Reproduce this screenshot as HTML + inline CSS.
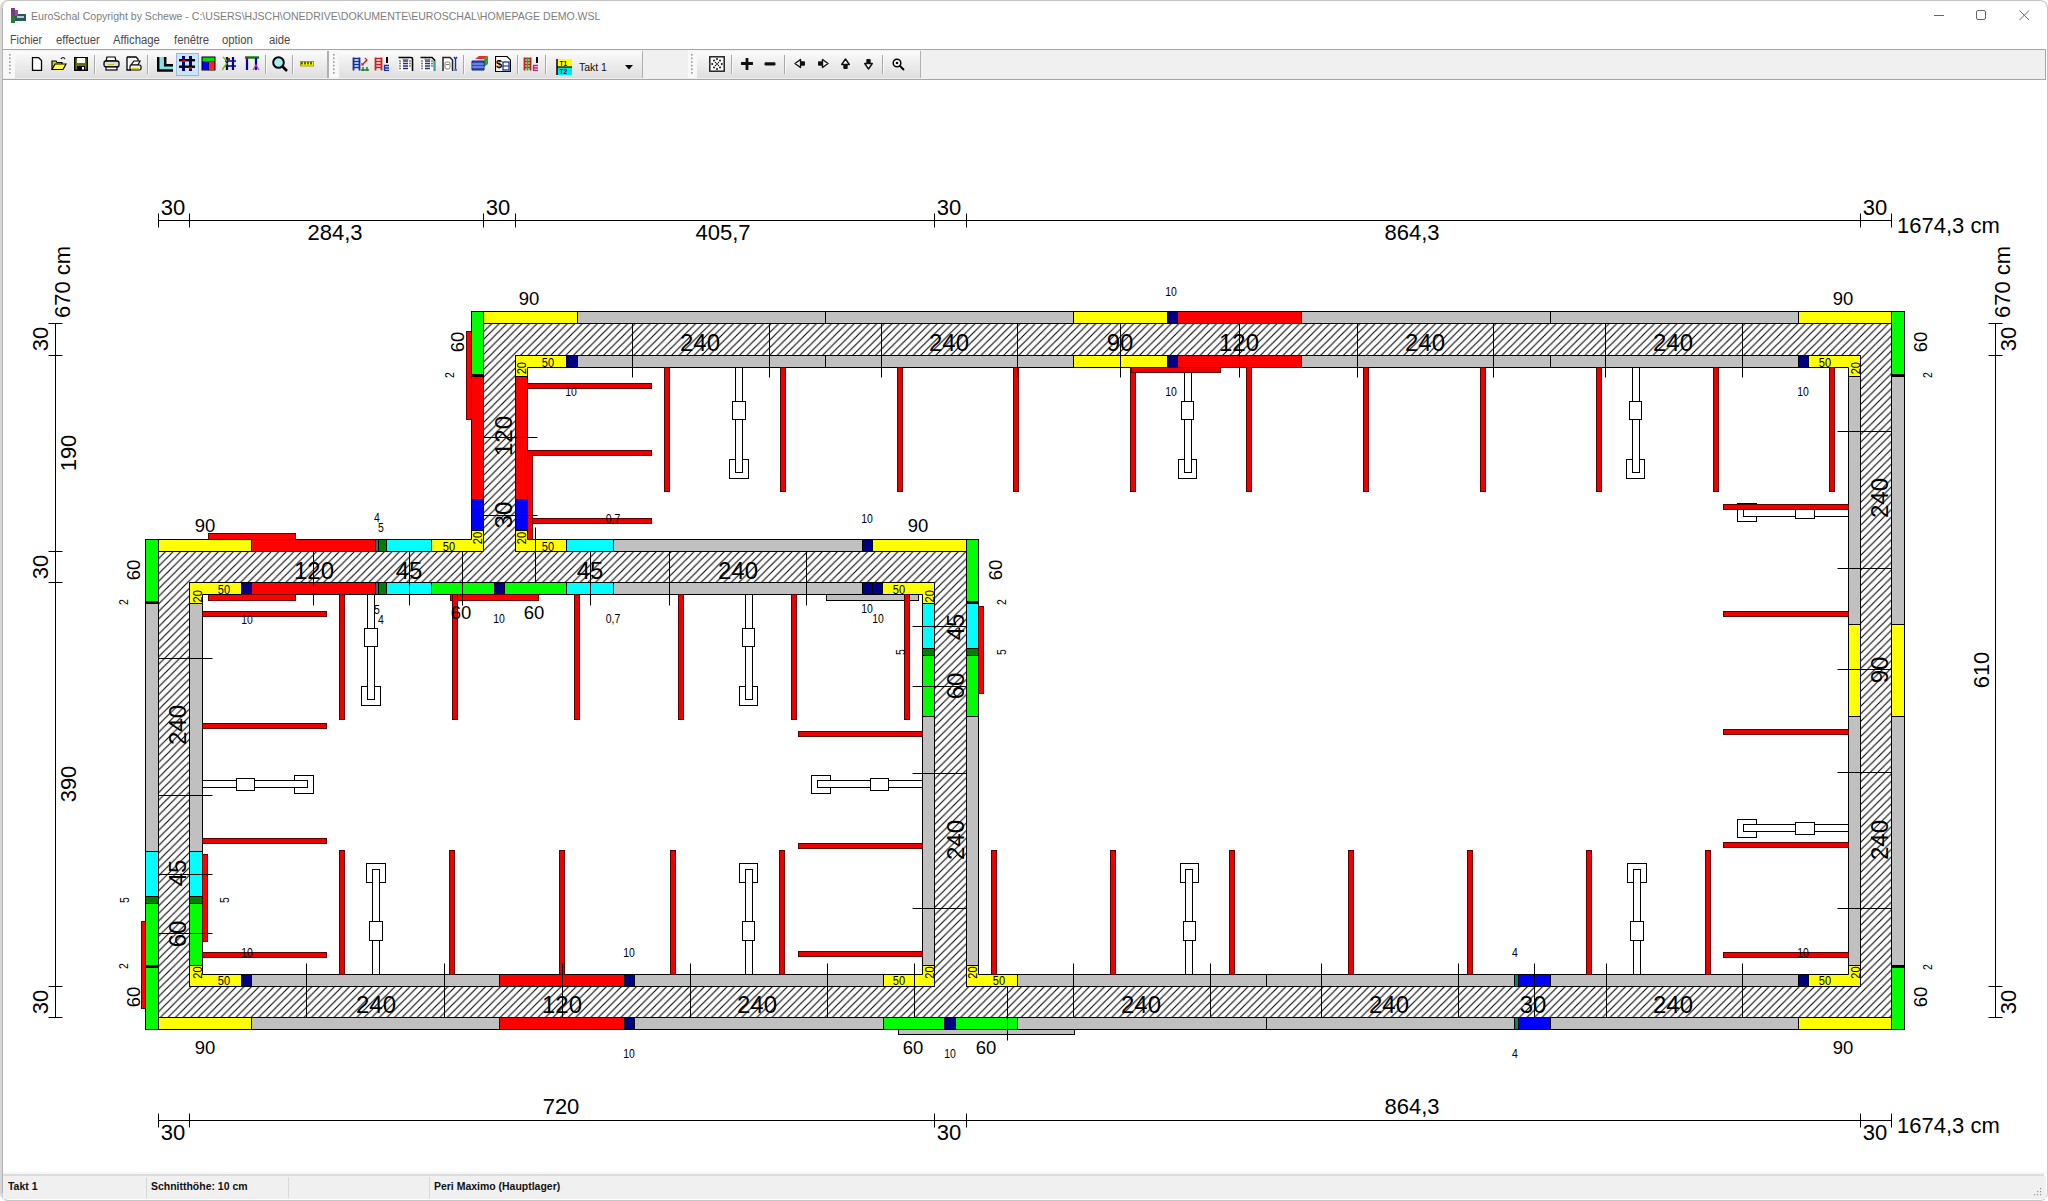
<!DOCTYPE html>
<html><head><meta charset="utf-8"><title>EuroSchal</title>
<style>
html,body{margin:0;padding:0;}
body{width:2048px;height:1201px;position:relative;overflow:hidden;background:#fff;font-family:"Liberation Sans",sans-serif;}
.abs{position:absolute;}
svg text{font-family:"Liberation Sans",sans-serif;}
</style></head><body>
<div class="abs" style="left:0;top:0;width:2048px;height:1201px;background:#fff;"></div>
<!-- window frame -->
<div class="abs" style="left:0;top:0;border:1px solid #c4c4c4;border-left:3px solid #d6d6d6;border-radius:8px 8px 8px 8px;box-sizing:border-box;width:2048px;height:1201px;"></div><div class="abs" style="left:2px;top:8px;width:1px;height:1185px;background:#b4b4b4"></div>
<svg style="position:absolute;left:11px;top:8px" width="15" height="15" viewBox="0 0 15 15"><rect x="0" y="0" width="4" height="15" fill="#7a3a8a"/><rect x="0" y="8" width="4" height="7" fill="#2a7a3a"/><rect x="4" y="6" width="11" height="7" fill="#2a5a5a"/><rect x="6" y="8" width="7" height="2" fill="#c0c0e0"/><rect x="4" y="2" width="3" height="6" fill="#9050a0"/></svg>
<div class="abs" style="left:31px;top:9px;font-size:11.8px;color:#7d7d7d;white-space:nowrap;transform-origin:0 0;transform:scaleX(0.895)">EuroSchal Copyright by Schewe - C:\USERS\HJSCH\ONEDRIVE\DOKUMENTE\EUROSCHAL\HOMEPAGE DEMO.WSL</div>
<svg class="abs" style="left:1930px;top:8px" width="110" height="16" viewBox="0 0 110 16">
<path d="M4,7.5 H14" stroke="#666" stroke-width="1"/>
<rect x="46.5" y="2.5" width="9" height="9" rx="1.5" fill="none" stroke="#666" stroke-width="1"/>
<path d="M89.5,2.5 L99,12 M99,2.5 L89.5,12" stroke="#666" stroke-width="1"/>
</svg>
<div class="abs" style="left:10px;top:33px;font-size:12px;color:#4a4a4a;white-space:nowrap;word-spacing:0">
<style>.mi{position:absolute;transform-origin:0 0;transform:scaleX(0.94)}</style>
<span class="mi" style="left:0;transform:scaleX(0.89)">Fichier</span><span class="mi" style="left:46px">effectuer</span><span class="mi" style="left:103px">Affichage</span><span class="mi" style="left:164px">fenêtre</span><span class="mi" style="left:212px">option</span><span class="mi" style="left:259px">aide</span></div>
<!-- toolbar band -->
<div class="abs" style="left:3px;top:49px;width:2043px;height:31px;background:#f0f0f0;border-top:1px solid #a6a6a6;border-bottom:1px solid #a6a6a6;border-right:1px solid #a6a6a6;box-sizing:border-box;"></div>
<div class="abs" style="left:3px;top:50px;width:12px;height:28px;background:#f8f8f8;"></div>
<div class="abs" style="left:15px;top:51px;width:312px;height:27px;background:linear-gradient(#fbfbfb,#dedede);border-right:2px solid #b0b0b0;"></div>
<div class="abs" style="left:329px;top:50px;width:10px;height:28px;background:#f8f8f8;"></div>
<div class="abs" style="left:339px;top:51px;width:303px;height:27px;background:linear-gradient(#fbfbfb,#dedede);border-right:1px solid #b0b0b0;"></div>
<div class="abs" style="left:688px;top:50px;width:9px;height:28px;background:#f8f8f8;"></div>
<div class="abs" style="left:697px;top:51px;width:223px;height:27px;background:linear-gradient(#fbfbfb,#dedede);border-right:1px solid #b0b0b0;"></div>
<svg style="position:absolute;left:9px;top:54px" width="2" height="22" viewBox="0 0 2 22"><rect x="0" y="0.0" width="1.6" height="1.6" fill="#9a9a9a"/><rect x="0" y="3.6" width="1.6" height="1.6" fill="#9a9a9a"/><rect x="0" y="7.2" width="1.6" height="1.6" fill="#9a9a9a"/><rect x="0" y="10.8" width="1.6" height="1.6" fill="#9a9a9a"/><rect x="0" y="14.4" width="1.6" height="1.6" fill="#9a9a9a"/><rect x="0" y="18.0" width="1.6" height="1.6" fill="#9a9a9a"/></svg>
<svg style="position:absolute;left:31px;top:57px" width="12" height="14" viewBox="0 0 12 14"><path d="M1.5,0.5 H7.5 L10.5,3.5 V13.5 H1.5 Z" fill="#fff" stroke="#000" stroke-width="1.3"/></svg>
<svg style="position:absolute;left:51px;top:56px" width="16" height="15" viewBox="0 0 16 15"><path d="M1,5 H5 L6,6.5 H11 V13.5 H1 Z" fill="#d8d800" stroke="#000" stroke-width="1.2"/><path d="M1,13.5 L4,8 H15 L12,13.5 Z" fill="#ffff40" stroke="#000" stroke-width="1.2"/><path d="M10,3 Q12,0 14,3" fill="none" stroke="#000" stroke-width="1.2"/></svg>
<svg style="position:absolute;left:74px;top:57px" width="14" height="14" viewBox="0 0 14 14"><rect x="0.7" y="0.7" width="12.6" height="12.6" fill="#707000" stroke="#000" stroke-width="1.4"/><rect x="3" y="1" width="8" height="5" fill="#fff"/><rect x="3" y="9" width="8" height="4.3" fill="#000"/><rect x="8" y="10" width="2" height="2.5" fill="#fff"/></svg>
<div style="position:absolute;left:94px;top:55px;width:1px;height:19px;background:#a8a8a8;border-right:1px solid #fafafa"></div>
<svg style="position:absolute;left:103px;top:56px" width="17" height="15" viewBox="0 0 17 15"><path d="M4,1 H12 L13,5 H3 Z" fill="#fff" stroke="#000" stroke-width="1.2"/><rect x="1" y="5" width="15" height="6" rx="2" fill="#ddd" stroke="#000" stroke-width="1.3"/><rect x="3" y="11" width="11" height="3" fill="#fff" stroke="#000" stroke-width="1.2"/><rect x="5" y="8" width="6" height="1.2" fill="#cc0"/></svg>
<svg style="position:absolute;left:126px;top:56px" width="16" height="16" viewBox="0 0 16 16"><path d="M1,1 H10 L12,3 V6 M1,1 V14 H5" fill="#fff" stroke="#000" stroke-width="1.3"/><path d="M5,9 L8,5 H14 L12,9 Z" fill="#fff" stroke="#000" stroke-width="1.2"/><rect x="4" y="9" width="11" height="5" rx="1.5" fill="#eee" stroke="#000" stroke-width="1.2"/><rect x="6" y="12" width="7" height="1.2" fill="#cc0"/></svg>
<div style="position:absolute;left:147px;top:55px;width:1px;height:19px;background:#a8a8a8;border-right:1px solid #fafafa"></div>
<svg style="position:absolute;left:157px;top:57px" width="16" height="15" viewBox="0 0 16 15"><path d="M2.5,0 V12 H16 V7.5 H9 V0 Z" fill="#80e0e8"/><path d="M1.2,0 V13.5 H16" fill="none" stroke="#000" stroke-width="2.5"/><path d="M8.2,0 V8.3 H16" fill="none" stroke="#000" stroke-width="2.5"/></svg>
<div style="position:absolute;left:176px;top:53px;width:21px;height:21px;background:#cce4f7;border:1px solid #99b8d8"></div>
<svg style="position:absolute;left:179px;top:56px" width="16" height="15" viewBox="0 0 16 15"><rect x="3" y="0" width="3" height="15" fill="#000080"/><rect x="10" y="0" width="3" height="15" fill="#000080"/><rect x="0" y="3" width="16" height="2.4" fill="#000"/><rect x="0" y="9.5" width="16" height="2.4" fill="#000"/><rect x="3" y="4" width="3" height="2" fill="#d00"/><rect x="10" y="11" width="3" height="2" fill="#d00"/></svg>
<svg style="position:absolute;left:201px;top:56px" width="15" height="15" viewBox="0 0 15 15"><rect x="0.5" y="0.5" width="14" height="14" fill="#000" /><rect x="1.5" y="1.5" width="12" height="4" fill="#00e000"/><rect x="1.5" y="6" width="6" height="8" fill="#0000ff"/><rect x="8" y="6" width="5.5" height="8" fill="#ff2020"/></svg>
<svg style="position:absolute;left:222px;top:56px" width="16" height="15" viewBox="0 0 16 15"><path d="M5,1 V14 M11,1 V14" stroke="#00008b" stroke-width="2.2"/><path d="M3,5 H14 M3,10 H14" stroke="#00008b" stroke-width="1.5"/><path d="M0,14 L5,7 M1,1 L5,5" stroke="#70c000" stroke-width="1.5"/><rect x="6" y="2" width="2" height="2" fill="#d00"/></svg>
<svg style="position:absolute;left:244px;top:56px" width="16" height="15" viewBox="0 0 16 15"><path d="M1,1.5 H15" stroke="#008000" stroke-width="2.4"/><path d="M3,2 V14 M12,2 V14" stroke="#0000c0" stroke-width="2.2"/><path d="M9,14 L12,9 L15,14" fill="none" stroke="#c040c0" stroke-width="1.2"/><rect x="2" y="1" width="2" height="2" fill="#d00"/></svg>
<div style="position:absolute;left:265px;top:55px;width:1px;height:19px;background:#a8a8a8;border-right:1px solid #fafafa"></div>
<svg style="position:absolute;left:272px;top:56px" width="16" height="16" viewBox="0 0 16 16"><circle cx="6.5" cy="6.5" r="5.3" fill="#a0f0f0" stroke="#000" stroke-width="2"/><path d="M10.5,10.5 L15,15" stroke="#000" stroke-width="2.6"/></svg>
<div style="position:absolute;left:292px;top:55px;width:1px;height:19px;background:#a8a8a8;border-right:1px solid #fafafa"></div>
<svg style="position:absolute;left:300px;top:61px" width="15" height="6" viewBox="0 0 15 6"><rect x="0.5" y="0.5" width="13" height="4.5" fill="#ffff00" stroke="#a0a000" stroke-width="1"/><path d="M2,1 V3.5 M5,1 V3.5 M8,1 V3.5 M11,1 V3.5" stroke="#000" stroke-width="1.2"/></svg>
<svg style="position:absolute;left:333px;top:54px" width="2" height="22" viewBox="0 0 2 22"><rect x="0" y="0.0" width="1.6" height="1.6" fill="#9a9a9a"/><rect x="0" y="3.6" width="1.6" height="1.6" fill="#9a9a9a"/><rect x="0" y="7.2" width="1.6" height="1.6" fill="#9a9a9a"/><rect x="0" y="10.8" width="1.6" height="1.6" fill="#9a9a9a"/><rect x="0" y="14.4" width="1.6" height="1.6" fill="#9a9a9a"/><rect x="0" y="18.0" width="1.6" height="1.6" fill="#9a9a9a"/></svg>
<svg style="position:absolute;left:352px;top:57px" width="17" height="14" viewBox="0 0 17 14"><path d="M1.5,0.5 V13.5 M7.5,0.5 V13.5" stroke="#1030a0" stroke-width="1.8"/><path d="M1.5,1.5 H7.5 M1.5,4.5 H7.5 M1.5,7.5 H7.5 M1.5,10.5 H7.5" stroke="#1030a0" stroke-width="1.3"/><path d="M9,13 H17 M11,10 V14 M15,10 V14" stroke="#208020" stroke-width="1.5"/><path d="M10,8 L15,3" stroke="#e02020" stroke-width="1.5"/><path d="M13,1 L15,3 L13,5 M10,6 V8 H12" fill="none" stroke="#e02020" stroke-width="1.2"/></svg>
<svg style="position:absolute;left:374px;top:57px" width="17" height="14" viewBox="0 0 17 14"><path d="M1.5,0.5 V13.5 M7.5,0.5 V13.5" stroke="#d02020" stroke-width="1.8"/><path d="M1.5,1.5 H7.5 M1.5,4.5 H7.5 M1.5,7.5 H7.5 M1.5,10.5 H7.5" stroke="#d02020" stroke-width="1.3"/><path d="M10,8.5 H15 M10,11 H15 M10,13.5 H15 M10.5,8.5 V13.5" stroke="#1030c0" stroke-width="1.4"/><rect x="12" y="0" width="2" height="6" fill="#000"/></svg>
<svg style="position:absolute;left:398px;top:56px" width="16" height="16" viewBox="0 0 16 16"><rect x="0.5" y="1" width="14" height="14" fill="#fff"/><path d="M0.5,1.5 H13 Q14.5,1.5 14.5,3 V15" fill="none" stroke="#000" stroke-width="1.6"/><path d="M1.5,5 H2.5 M1.5,7.5 H2.5 M1.5,10 H2.5 M1.5,12.5 H2.5" stroke="#000" stroke-width="1.3"/><path d="M5,5 H10 M5,7.5 H10 M5,10 H10 M5,12.5 H10" stroke="#203080" stroke-width="1.3"/><path d="M11.5,5 H12.5 M11.5,7.5 H12.5 M11.5,10 H12.5" stroke="#000" stroke-width="1.3"/><rect x="4.5" y="2.5" width="6" height="1.5" fill="#a08080"/></svg>
<svg style="position:absolute;left:420px;top:56px" width="16" height="16" viewBox="0 0 16 16"><rect x="0.5" y="1" width="14" height="14" fill="#fff"/><path d="M0.5,1.5 H12 L14.5,4 V15" fill="none" stroke="#000" stroke-width="1.6"/><path d="M14.5,5 V15" stroke="#40a0a0" stroke-width="1.2"/><path d="M1.5,5 H2.5 M1.5,7.5 H2.5 M1.5,10 H2.5 M1.5,12.5 H2.5" stroke="#000" stroke-width="1.3"/><path d="M5,5 H10 M5,7.5 H10 M5,10 H10 M5,12.5 H10" stroke="#203080" stroke-width="1.3"/><path d="M11.5,5 H12.5 M11.5,7.5 H12.5 M11.5,10 H12.5" stroke="#000" stroke-width="1.3"/><rect x="4.5" y="2.5" width="6" height="1.5" fill="#a08080"/></svg>
<svg style="position:absolute;left:442px;top:56px" width="17" height="16" viewBox="0 0 17 16"><path d="M1,15 V1.5 H8 L10.5,4 V15" fill="#fff" stroke="#222" stroke-width="1.5"/><rect x="3" y="6" width="5" height="7" rx="1.5" fill="none" stroke="#777" stroke-width="1"/><path d="M4,8.5 H7" stroke="#777"/><path d="M13.5,3 V13 M12,1 L13.5,3 L15,1" fill="none" stroke="#2030a0" stroke-width="1.4"/><path d="M12,14 H15" stroke="#2030a0" stroke-width="1.2"/></svg>
<div style="position:absolute;left:463px;top:55px;width:1px;height:19px;background:#a8a8a8;border-right:1px solid #fafafa"></div>
<svg style="position:absolute;left:471px;top:56px" width="17" height="15" viewBox="0 0 17 15"><path d="M4,3 L8,0 H17 L13,3 Z" fill="#e03030"/><path d="M13,3 L17,0 V8 L13,11 Z" fill="#30a030"/><path d="M1,5 H13 V14 H1 Z" fill="#3050c0" stroke="#102080" stroke-width="1"/><path d="M1,8 H13 M1,11 H13" stroke="#a0b0ff" stroke-width="1"/></svg>
<svg style="position:absolute;left:495px;top:56px" width="16" height="16" viewBox="0 0 16 16"><path d="M0.5,0.5 H12 L15.5,4 V15.5 H0.5 Z" fill="#fff" stroke="#000" stroke-width="1.2"/><text x="1" y="12" font-size="11" font-family="Liberation Sans" font-weight="bold" fill="#000">$</text><rect x="8" y="6" width="6" height="8" fill="none" stroke="#2040a0" stroke-width="1.4"/><path d="M8,10 H14" stroke="#2040a0" stroke-width="1.2"/></svg>
<div style="position:absolute;left:517px;top:55px;width:1px;height:19px;background:#a8a8a8;border-right:1px solid #fafafa"></div>
<svg style="position:absolute;left:523px;top:57px" width="17" height="14" viewBox="0 0 17 14"><path d="M1.5,0.5 V13.5 M7.5,0.5 V13.5" stroke="#c02020" stroke-width="1.8"/><path d="M1.5,1.5 H7.5 M1.5,4.5 H7.5 M1.5,7.5 H7.5 M1.5,10.5 H7.5" stroke="#c02020" stroke-width="1.3"/><path d="M4.5,0.5 V13.5" stroke="#20b020" stroke-width="1.8"/><path d="M10,8.5 H15 M10,11 H15 M10,13.5 H15 M10.5,8.5 V13.5" stroke="#c02080" stroke-width="1.4"/><rect x="13" y="0" width="2" height="6" fill="#000"/></svg>
<div style="position:absolute;left:545px;top:55px;width:1px;height:19px;background:#a8a8a8;border-right:1px solid #fafafa"></div>
<svg style="position:absolute;left:556px;top:59px" width="16" height="16" viewBox="0 0 16 16"><rect x="1" y="0" width="15" height="8" fill="#ffff00"/><rect x="1" y="8" width="15" height="8" fill="#00e8f0"/><path d="M1,0 V16" stroke="#000" stroke-width="1.5"/><path d="M1,8 H16" stroke="#000" stroke-width="1.2"/><text x="3.5" y="6.6" font-size="6.5" font-weight="bold" font-family="Liberation Sans" fill="#000">T1</text><text x="3.5" y="14.8" font-size="6.5" font-weight="bold" font-family="Liberation Sans" fill="#000">T2</text></svg>
<div style="position:absolute;left:579px;top:61px;font-size:11.5px;color:#111;transform-origin:0 0;transform:scaleX(0.91)">Takt 1</div>
<svg style="position:absolute;left:625px;top:65px" width="8" height="5" viewBox="0 0 8 5"><path d="M0,0 H8 L4,4.5 Z" fill="#000"/></svg>
<svg style="position:absolute;left:691px;top:54px" width="2" height="22" viewBox="0 0 2 22"><rect x="0" y="0.0" width="1.6" height="1.6" fill="#9a9a9a"/><rect x="0" y="3.6" width="1.6" height="1.6" fill="#9a9a9a"/><rect x="0" y="7.2" width="1.6" height="1.6" fill="#9a9a9a"/><rect x="0" y="10.8" width="1.6" height="1.6" fill="#9a9a9a"/><rect x="0" y="14.4" width="1.6" height="1.6" fill="#9a9a9a"/><rect x="0" y="18.0" width="1.6" height="1.6" fill="#9a9a9a"/></svg>
<svg style="position:absolute;left:709px;top:56px" width="16" height="16" viewBox="0 0 16 16"><rect x="0.8" y="0.8" width="14.4" height="14.4" fill="#fff" stroke="#222" stroke-width="1.5"/><g fill="#111"><circle cx="8" cy="3" r="1"/><circle cx="5" cy="4.5" r="1"/><circle cx="11" cy="4.5" r="1"/><circle cx="3.2" cy="8" r="1"/><circle cx="12.8" cy="8" r="1"/><circle cx="5" cy="11.5" r="1"/><circle cx="11" cy="11.5" r="1"/><circle cx="8" cy="13" r="1"/><circle cx="8" cy="8" r="1"/><circle cx="6.5" cy="6.5" r="0.7"/><circle cx="9.5" cy="9.5" r="0.7"/><circle cx="9.5" cy="6.5" r="0.7"/><circle cx="6.5" cy="9.5" r="0.7"/></g></svg>
<div style="position:absolute;left:731px;top:55px;width:1px;height:19px;background:#a8a8a8;border-right:1px solid #fafafa"></div>
<svg style="position:absolute;left:741px;top:58px" width="12" height="12" viewBox="0 0 12 12"><path d="M6,0.5 V11.5 M0.5,5.5 H11.5" stroke="#111" stroke-width="2.8" stroke-linecap="round"/></svg>
<svg style="position:absolute;left:764px;top:61px" width="12" height="6" viewBox="0 0 12 6"><rect x="0.5" y="1.2" width="11" height="3.2" rx="1.2" fill="#111"/></svg>
<div style="position:absolute;left:784px;top:55px;width:1px;height:19px;background:#a8a8a8;border-right:1px solid #fafafa"></div>
<svg style="position:absolute;left:794px;top:58px" width="12" height="11" viewBox="0 0 12 11"><path d="M1,5.5 L6.5,1.5 V9.5 Z" fill="#fff" stroke="#111" stroke-width="1.4" stroke-linejoin="round"/><rect x="6" y="3.3" width="5" height="4.4" rx="1" fill="#111"/></svg>
<svg style="position:absolute;left:817px;top:58px" width="12" height="11" viewBox="0 0 12 11"><path d="M11,5.5 L5.5,1.5 V9.5 Z" fill="#fff" stroke="#111" stroke-width="1.4" stroke-linejoin="round"/><rect x="1" y="3.3" width="5" height="4.4" rx="1" fill="#111"/></svg>
<svg style="position:absolute;left:841px;top:58px" width="9" height="12" viewBox="0 0 9 12"><path d="M4.5,1 L8.3,6.5 H0.7 Z" fill="#fff" stroke="#111" stroke-width="1.4" stroke-linejoin="round"/><rect x="2.3" y="6" width="4.4" height="5" rx="1" fill="#111"/></svg>
<svg style="position:absolute;left:864px;top:58px" width="9" height="12" viewBox="0 0 9 12"><path d="M4.5,11 L8.3,5.5 H0.7 Z" fill="#fff" stroke="#111" stroke-width="1.4" stroke-linejoin="round"/><rect x="2.3" y="1" width="4.4" height="5" rx="1" fill="#111"/></svg>
<div style="position:absolute;left:882px;top:55px;width:1px;height:19px;background:#a8a8a8;border-right:1px solid #fafafa"></div>
<svg style="position:absolute;left:892px;top:58px" width="13" height="13" viewBox="0 0 13 13"><circle cx="5" cy="5" r="3.8" fill="#fff" stroke="#000" stroke-width="1.5"/><circle cx="5" cy="5" r="1.3" fill="#000"/><path d="M7.5,7.5 L12,12" stroke="#000" stroke-width="2"/></svg>
<!-- drawing -->
<svg class="abs" style="left:0;top:0" width="2048" height="1201" viewBox="0 0 2048 1201">
<defs>
<pattern id="hatch" patternUnits="userSpaceOnUse" width="7.55" height="7.55" patternTransform="translate(0,0)">
<rect width="7.55" height="7.55" fill="#fff"/>
<path d="M-1,1 L1,-1 M0,7.55 L7.55,0 M6.55,8.55 L8.55,6.55" stroke="#000" stroke-width="1.1"/>
</pattern>
</defs>
<path d="M483.5,323.5 L1891.5,323.5 L1891.5,1017.5 L158.5,1017.5 L158.5,551.5 L483.5,551.5 Z M515.5,355.5 L1860.5,355.5 L1860.5,986.5 L966.5,986.5 L966.5,551.5 L515.5,551.5 Z M189.5,582.5 L934.5,582.5 L934.5,986.5 L189.5,986.5 Z" fill="url(#hatch)" fill-rule="evenodd" stroke="#000" stroke-width="1"/>
<rect x="483.5" y="311.5" width="94.0" height="12.0" fill="#ffff00" stroke="#000" stroke-width="1"/>
<rect x="577.5" y="311.5" width="248.0" height="12.0" fill="#c0c0c0" stroke="#000" stroke-width="1"/>
<rect x="825.5" y="311.5" width="248.0" height="12.0" fill="#c0c0c0" stroke="#000" stroke-width="1"/>
<rect x="1073.5" y="311.5" width="94.0" height="12.0" fill="#ffff00" stroke="#000" stroke-width="1"/>
<rect x="1167.5" y="311.5" width="10.0" height="12.0" fill="#000080" stroke="#000" stroke-width="1"/>
<rect x="1177.5" y="311.5" width="124.0" height="12.0" fill="#ff0000" stroke="#000" stroke-width="1"/>
<rect x="1301.5" y="311.5" width="249.0" height="12.0" fill="#c0c0c0" stroke="#000" stroke-width="1"/>
<rect x="1550.5" y="311.5" width="248.0" height="12.0" fill="#c0c0c0" stroke="#000" stroke-width="1"/>
<rect x="1798.5" y="311.5" width="93.0" height="12.0" fill="#ffff00" stroke="#000" stroke-width="1"/>
<rect x="566.5" y="355.5" width="11.0" height="12.0" fill="#000080" stroke="#000" stroke-width="1"/>
<rect x="577.5" y="355.5" width="248.0" height="12.0" fill="#c0c0c0" stroke="#000" stroke-width="1"/>
<rect x="825.5" y="355.5" width="248.0" height="12.0" fill="#c0c0c0" stroke="#000" stroke-width="1"/>
<rect x="1073.5" y="355.5" width="94.0" height="12.0" fill="#ffff00" stroke="#000" stroke-width="1"/>
<rect x="1167.5" y="355.5" width="10.0" height="12.0" fill="#000080" stroke="#000" stroke-width="1"/>
<rect x="1177.5" y="355.5" width="124.0" height="12.0" fill="#ff0000" stroke="#000" stroke-width="1"/>
<rect x="1301.5" y="355.5" width="249.0" height="12.0" fill="#c0c0c0" stroke="#000" stroke-width="1"/>
<rect x="1550.5" y="355.5" width="248.0" height="12.0" fill="#c0c0c0" stroke="#000" stroke-width="1"/>
<rect x="1798.5" y="355.5" width="10.0" height="12.0" fill="#000080" stroke="#000" stroke-width="1"/>
<rect x="466.5" y="331.5" width="5.0" height="88.0" fill="#ff0000" stroke="#6a0000" stroke-width="1"/>
<rect x="471.5" y="311.5" width="12.0" height="63.0" fill="#00ff00" stroke="#000" stroke-width="1"/>
<rect x="471.5" y="374.5" width="12.0" height="2.0" fill="#000000" stroke="#000" stroke-width="1"/>
<rect x="471.5" y="376.5" width="12.0" height="123.0" fill="#ff0000" stroke="#000" stroke-width="1"/>
<rect x="471.5" y="499.5" width="12.0" height="31.0" fill="#0000ff" stroke="#000" stroke-width="1"/>
<rect x="515.5" y="376.5" width="12.0" height="123.0" fill="#ff0000" stroke="#000" stroke-width="1"/>
<rect x="515.5" y="499.5" width="12.0" height="31.0" fill="#0000ff" stroke="#000" stroke-width="1"/>
<rect x="527.5" y="450.5" width="5.0" height="93.0" fill="#ff0000" stroke="#6a0000" stroke-width="1"/>
<rect x="208.5" y="533.5" width="87.0" height="6.0" fill="#ff0000" stroke="#6a0000" stroke-width="1"/>
<rect x="158.5" y="539.5" width="93.0" height="12.0" fill="#ffff00" stroke="#000" stroke-width="1"/>
<rect x="251.5" y="539.5" width="124.0" height="12.0" fill="#ff0000" stroke="#000" stroke-width="1"/>
<rect x="375.5" y="539.5" width="3.0" height="12.0" fill="#008080" stroke="#000" stroke-width="1"/>
<rect x="378.5" y="539.5" width="8.0" height="12.0" fill="#008000" stroke="#000" stroke-width="1"/>
<rect x="386.5" y="539.5" width="45.0" height="12.0" fill="#00ffff" stroke="#000" stroke-width="1"/>
<rect x="566.5" y="539.5" width="47.0" height="12.0" fill="#00ffff" stroke="#000" stroke-width="1"/>
<rect x="613.5" y="539.5" width="249.0" height="12.0" fill="#c0c0c0" stroke="#000" stroke-width="1"/>
<rect x="862.5" y="539.5" width="10.0" height="12.0" fill="#000080" stroke="#000" stroke-width="1"/>
<rect x="872.5" y="539.5" width="94.0" height="12.0" fill="#ffff00" stroke="#000" stroke-width="1"/>
<rect x="241.5" y="582.5" width="10.0" height="12.0" fill="#000080" stroke="#000" stroke-width="1"/>
<rect x="251.5" y="582.5" width="124.0" height="12.0" fill="#ff0000" stroke="#000" stroke-width="1"/>
<rect x="375.5" y="582.5" width="3.0" height="12.0" fill="#008080" stroke="#000" stroke-width="1"/>
<rect x="378.5" y="582.5" width="8.0" height="12.0" fill="#008000" stroke="#000" stroke-width="1"/>
<rect x="386.5" y="582.5" width="45.0" height="12.0" fill="#00ffff" stroke="#000" stroke-width="1"/>
<rect x="431.5" y="582.5" width="63.0" height="12.0" fill="#00ff00" stroke="#000" stroke-width="1"/>
<rect x="494.5" y="582.5" width="10.0" height="12.0" fill="#000080" stroke="#000" stroke-width="1"/>
<rect x="504.5" y="582.5" width="62.0" height="12.0" fill="#00ff00" stroke="#000" stroke-width="1"/>
<rect x="566.5" y="582.5" width="47.0" height="12.0" fill="#00ffff" stroke="#000" stroke-width="1"/>
<rect x="613.5" y="582.5" width="249.0" height="12.0" fill="#c0c0c0" stroke="#000" stroke-width="1"/>
<rect x="862.5" y="582.5" width="10.0" height="12.0" fill="#000080" stroke="#000" stroke-width="1"/>
<rect x="872.5" y="582.5" width="10.0" height="12.0" fill="#000080" stroke="#000" stroke-width="1"/>
<rect x="208.5" y="594.5" width="87.0" height="6.0" fill="#ff0000" stroke="#6a0000" stroke-width="1"/>
<rect x="450.5" y="594.5" width="88.0" height="6.0" fill="#ff0000" stroke="#6a0000" stroke-width="1"/>
<rect x="826.5" y="594.5" width="92.0" height="6.0" fill="#c0c0c0" stroke="#000" stroke-width="1"/>
<rect x="145.5" y="539.5" width="13.0" height="62.0" fill="#00ff00" stroke="#000" stroke-width="1"/>
<rect x="145.5" y="601.5" width="13.0" height="2.0" fill="#000000" stroke="#000" stroke-width="1"/>
<rect x="145.5" y="603.5" width="13.0" height="248.0" fill="#c0c0c0" stroke="#000" stroke-width="1"/>
<rect x="145.5" y="851.5" width="13.0" height="45.0" fill="#00ffff" stroke="#000" stroke-width="1"/>
<rect x="145.5" y="896.5" width="13.0" height="7.0" fill="#008000" stroke="#000" stroke-width="1"/>
<rect x="145.5" y="903.5" width="13.0" height="62.0" fill="#00ff00" stroke="#000" stroke-width="1"/>
<rect x="145.5" y="965.5" width="13.0" height="2.0" fill="#000000" stroke="#000" stroke-width="1"/>
<rect x="145.5" y="967.5" width="13.0" height="62.0" fill="#00ff00" stroke="#000" stroke-width="1"/>
<rect x="141.5" y="921.5" width="4.0" height="87.0" fill="#ff0000" stroke="#6a0000" stroke-width="1"/>
<rect x="189.5" y="603.5" width="13.0" height="248.0" fill="#c0c0c0" stroke="#000" stroke-width="1"/>
<rect x="189.5" y="851.5" width="13.0" height="45.0" fill="#00ffff" stroke="#000" stroke-width="1"/>
<rect x="189.5" y="896.5" width="13.0" height="7.0" fill="#008000" stroke="#000" stroke-width="1"/>
<rect x="189.5" y="903.5" width="13.0" height="62.0" fill="#00ff00" stroke="#000" stroke-width="1"/>
<rect x="202.5" y="854.5" width="5.0" height="87.0" fill="#ff0000" stroke="#6a0000" stroke-width="1"/>
<rect x="922.5" y="603.5" width="12.0" height="45.0" fill="#00ffff" stroke="#000" stroke-width="1"/>
<rect x="922.5" y="648.5" width="12.0" height="7.0" fill="#008000" stroke="#000" stroke-width="1"/>
<rect x="922.5" y="655.5" width="12.0" height="61.0" fill="#00ff00" stroke="#000" stroke-width="1"/>
<rect x="922.5" y="716.5" width="12.0" height="249.0" fill="#c0c0c0" stroke="#000" stroke-width="1"/>
<rect x="966.5" y="539.5" width="12.0" height="62.0" fill="#00ff00" stroke="#000" stroke-width="1"/>
<rect x="966.5" y="601.5" width="12.0" height="2.0" fill="#000000" stroke="#000" stroke-width="1"/>
<rect x="966.5" y="603.5" width="12.0" height="45.0" fill="#00ffff" stroke="#000" stroke-width="1"/>
<rect x="966.5" y="648.5" width="12.0" height="7.0" fill="#008000" stroke="#000" stroke-width="1"/>
<rect x="966.5" y="655.5" width="12.0" height="61.0" fill="#00ff00" stroke="#000" stroke-width="1"/>
<rect x="966.5" y="716.5" width="12.0" height="249.0" fill="#c0c0c0" stroke="#000" stroke-width="1"/>
<rect x="978.5" y="606.5" width="5.0" height="87.0" fill="#ff0000" stroke="#6a0000" stroke-width="1"/>
<rect x="1848.5" y="376.5" width="12.0" height="248.0" fill="#c0c0c0" stroke="#000" stroke-width="1"/>
<rect x="1848.5" y="624.5" width="12.0" height="92.0" fill="#ffff00" stroke="#000" stroke-width="1"/>
<rect x="1848.5" y="716.5" width="12.0" height="249.0" fill="#c0c0c0" stroke="#000" stroke-width="1"/>
<rect x="1891.5" y="311.5" width="13.0" height="63.0" fill="#00ff00" stroke="#000" stroke-width="1"/>
<rect x="1891.5" y="374.5" width="13.0" height="2.0" fill="#000000" stroke="#000" stroke-width="1"/>
<rect x="1891.5" y="376.5" width="13.0" height="248.0" fill="#c0c0c0" stroke="#000" stroke-width="1"/>
<rect x="1891.5" y="624.5" width="13.0" height="92.0" fill="#ffff00" stroke="#000" stroke-width="1"/>
<rect x="1891.5" y="716.5" width="13.0" height="249.0" fill="#c0c0c0" stroke="#000" stroke-width="1"/>
<rect x="1891.5" y="965.5" width="13.0" height="2.0" fill="#000000" stroke="#000" stroke-width="1"/>
<rect x="1891.5" y="967.5" width="13.0" height="62.0" fill="#00ff00" stroke="#000" stroke-width="1"/>
<rect x="241.5" y="974.5" width="10.0" height="12.0" fill="#000080" stroke="#000" stroke-width="1"/>
<rect x="251.5" y="974.5" width="248.0" height="12.0" fill="#c0c0c0" stroke="#000" stroke-width="1"/>
<rect x="499.5" y="974.5" width="125.0" height="12.0" fill="#ff0000" stroke="#000" stroke-width="1"/>
<rect x="624.5" y="974.5" width="10.0" height="12.0" fill="#000080" stroke="#000" stroke-width="1"/>
<rect x="634.5" y="974.5" width="249.0" height="12.0" fill="#c0c0c0" stroke="#000" stroke-width="1"/>
<rect x="1017.5" y="974.5" width="249.0" height="12.0" fill="#c0c0c0" stroke="#000" stroke-width="1"/>
<rect x="1266.5" y="974.5" width="248.0" height="12.0" fill="#c0c0c0" stroke="#000" stroke-width="1"/>
<rect x="1514.5" y="974.5" width="4.0" height="12.0" fill="#008080" stroke="#000" stroke-width="1"/>
<rect x="1518.5" y="974.5" width="32.0" height="12.0" fill="#0000ff" stroke="#000" stroke-width="1"/>
<rect x="1550.5" y="974.5" width="248.0" height="12.0" fill="#c0c0c0" stroke="#000" stroke-width="1"/>
<rect x="1798.5" y="974.5" width="10.0" height="12.0" fill="#000080" stroke="#000" stroke-width="1"/>
<rect x="898.5" y="1029.5" width="176.0" height="5.0" fill="#c0c0c0" stroke="#000" stroke-width="1"/>
<rect x="158.5" y="1017.5" width="93.0" height="12.0" fill="#ffff00" stroke="#000" stroke-width="1"/>
<rect x="251.5" y="1017.5" width="248.0" height="12.0" fill="#c0c0c0" stroke="#000" stroke-width="1"/>
<rect x="499.5" y="1017.5" width="125.0" height="12.0" fill="#ff0000" stroke="#000" stroke-width="1"/>
<rect x="624.5" y="1017.5" width="10.0" height="12.0" fill="#000080" stroke="#000" stroke-width="1"/>
<rect x="634.5" y="1017.5" width="249.0" height="12.0" fill="#c0c0c0" stroke="#000" stroke-width="1"/>
<rect x="883.5" y="1017.5" width="61.0" height="12.0" fill="#00ff00" stroke="#000" stroke-width="1"/>
<rect x="944.5" y="1017.5" width="11.0" height="12.0" fill="#000080" stroke="#000" stroke-width="1"/>
<rect x="955.5" y="1017.5" width="62.0" height="12.0" fill="#00ff00" stroke="#000" stroke-width="1"/>
<rect x="1017.5" y="1017.5" width="249.0" height="12.0" fill="#c0c0c0" stroke="#000" stroke-width="1"/>
<rect x="1266.5" y="1017.5" width="248.0" height="12.0" fill="#c0c0c0" stroke="#000" stroke-width="1"/>
<rect x="1514.5" y="1017.5" width="4.0" height="12.0" fill="#008080" stroke="#000" stroke-width="1"/>
<rect x="1518.5" y="1017.5" width="32.0" height="12.0" fill="#0000ff" stroke="#000" stroke-width="1"/>
<rect x="1550.5" y="1017.5" width="248.0" height="12.0" fill="#c0c0c0" stroke="#000" stroke-width="1"/>
<rect x="1798.5" y="1017.5" width="93.0" height="12.0" fill="#ffff00" stroke="#000" stroke-width="1"/>
<path d="M515.5,355.5 L566.5,355.5 L566.5,367.5 L527.5,367.5 L527.5,376.5 L515.5,376.5 Z" fill="#ffff00" stroke="#000" stroke-width="1"/>
<path d="M1808.5,355.5 L1860.5,355.5 L1860.5,376.5 L1848.5,376.5 L1848.5,367.5 L1808.5,367.5 Z" fill="#ffff00" stroke="#000" stroke-width="1"/>
<path d="M471.5,530.5 L483.5,530.5 L483.5,551.5 L431.5,551.5 L431.5,539.5 L471.5,539.5 Z" fill="#ffff00" stroke="#000" stroke-width="1"/>
<path d="M515.5,530.5 L527.5,530.5 L527.5,539.5 L566.5,539.5 L566.5,551.5 L515.5,551.5 Z" fill="#ffff00" stroke="#000" stroke-width="1"/>
<path d="M189.5,582.5 L241.5,582.5 L241.5,594.5 L202.5,594.5 L202.5,603.5 L189.5,603.5 Z" fill="#ffff00" stroke="#000" stroke-width="1"/>
<path d="M882.5,582.5 L934.5,582.5 L934.5,603.5 L922.5,603.5 L922.5,594.5 L882.5,594.5 Z" fill="#ffff00" stroke="#000" stroke-width="1"/>
<path d="M189.5,965.5 L202.5,965.5 L202.5,974.5 L241.5,974.5 L241.5,986.5 L189.5,986.5 Z" fill="#ffff00" stroke="#000" stroke-width="1"/>
<path d="M922.5,965.5 L934.5,965.5 L934.5,986.5 L883.5,986.5 L883.5,974.5 L922.5,974.5 Z" fill="#ffff00" stroke="#000" stroke-width="1"/>
<path d="M966.5,965.5 L978.5,965.5 L978.5,974.5 L1017.5,974.5 L1017.5,986.5 L966.5,986.5 Z" fill="#ffff00" stroke="#000" stroke-width="1"/>
<path d="M1848.5,965.5 L1860.5,965.5 L1860.5,986.5 L1808.5,986.5 L1808.5,974.5 L1848.5,974.5 Z" fill="#ffff00" stroke="#000" stroke-width="1"/>
<rect x="729.5" y="459.5" width="19.0" height="19.0" fill="none" stroke="#000" stroke-width="1"/>
<rect x="735.5" y="367.5" width="7.0" height="105.0" fill="#fff" stroke="#000" stroke-width="1"/>
<rect x="732.5" y="401.5" width="13.0" height="18.0" fill="#fff" stroke="#000" stroke-width="1"/>
<rect x="1178.5" y="459.5" width="18.0" height="19.0" fill="none" stroke="#000" stroke-width="1"/>
<rect x="1184.5" y="367.5" width="7.0" height="105.0" fill="#fff" stroke="#000" stroke-width="1"/>
<rect x="1181.5" y="401.5" width="12.0" height="18.0" fill="#fff" stroke="#000" stroke-width="1"/>
<rect x="1626.5" y="459.5" width="18.0" height="19.0" fill="none" stroke="#000" stroke-width="1"/>
<rect x="1632.5" y="367.5" width="7.0" height="105.0" fill="#fff" stroke="#000" stroke-width="1"/>
<rect x="1629.5" y="401.5" width="12.0" height="18.0" fill="#fff" stroke="#000" stroke-width="1"/>
<rect x="361.5" y="686.5" width="19.0" height="19.0" fill="none" stroke="#000" stroke-width="1"/>
<rect x="367.5" y="594.5" width="7.0" height="105.0" fill="#fff" stroke="#000" stroke-width="1"/>
<rect x="364.5" y="628.5" width="13.0" height="18.0" fill="#fff" stroke="#000" stroke-width="1"/>
<rect x="739.5" y="686.5" width="18.0" height="19.0" fill="none" stroke="#000" stroke-width="1"/>
<rect x="745.5" y="594.5" width="7.0" height="105.0" fill="#fff" stroke="#000" stroke-width="1"/>
<rect x="742.5" y="628.5" width="12.0" height="18.0" fill="#fff" stroke="#000" stroke-width="1"/>
<rect x="366.5" y="863.5" width="19.0" height="19.0" fill="none" stroke="#000" stroke-width="1"/>
<rect x="372.5" y="869.5" width="7.0" height="105.0" fill="#fff" stroke="#000" stroke-width="1"/>
<rect x="369.5" y="921.5" width="13.0" height="19.0" fill="#fff" stroke="#000" stroke-width="1"/>
<rect x="739.5" y="863.5" width="18.0" height="19.0" fill="none" stroke="#000" stroke-width="1"/>
<rect x="745.5" y="869.5" width="7.0" height="105.0" fill="#fff" stroke="#000" stroke-width="1"/>
<rect x="742.5" y="921.5" width="12.0" height="19.0" fill="#fff" stroke="#000" stroke-width="1"/>
<rect x="1180.5" y="863.5" width="18.0" height="19.0" fill="none" stroke="#000" stroke-width="1"/>
<rect x="1185.5" y="869.5" width="7.0" height="105.0" fill="#fff" stroke="#000" stroke-width="1"/>
<rect x="1183.5" y="921.5" width="12.0" height="19.0" fill="#fff" stroke="#000" stroke-width="1"/>
<rect x="1627.5" y="863.5" width="19.0" height="19.0" fill="none" stroke="#000" stroke-width="1"/>
<rect x="1633.5" y="869.5" width="7.0" height="105.0" fill="#fff" stroke="#000" stroke-width="1"/>
<rect x="1630.5" y="921.5" width="13.0" height="19.0" fill="#fff" stroke="#000" stroke-width="1"/>
<rect x="294.5" y="775.5" width="19.0" height="18.0" fill="none" stroke="#000" stroke-width="1"/>
<rect x="202.5" y="780.5" width="105.0" height="7.0" fill="#fff" stroke="#000" stroke-width="1"/>
<rect x="236.5" y="778.5" width="18.0" height="12.0" fill="#fff" stroke="#000" stroke-width="1"/>
<rect x="811.5" y="775.5" width="19.0" height="18.0" fill="none" stroke="#000" stroke-width="1"/>
<rect x="817.5" y="780.5" width="105.0" height="7.0" fill="#fff" stroke="#000" stroke-width="1"/>
<rect x="870.5" y="778.5" width="18.0" height="12.0" fill="#fff" stroke="#000" stroke-width="1"/>
<rect x="1737.5" y="503.5" width="19.0" height="18.0" fill="none" stroke="#000" stroke-width="1"/>
<rect x="1743.5" y="509.5" width="105.0" height="7.0" fill="#fff" stroke="#000" stroke-width="1"/>
<rect x="1795.5" y="506.5" width="19.0" height="12.0" fill="#fff" stroke="#000" stroke-width="1"/>
<rect x="1737.5" y="819.5" width="19.0" height="18.0" fill="none" stroke="#000" stroke-width="1"/>
<rect x="1743.5" y="824.5" width="105.0" height="7.0" fill="#fff" stroke="#000" stroke-width="1"/>
<rect x="1795.5" y="822.5" width="19.0" height="12.0" fill="#fff" stroke="#000" stroke-width="1"/>
<rect x="664.5" y="367.5" width="5.0" height="124.0" fill="#ee0000" stroke="#5a0000" stroke-width="1"/>
<rect x="780.5" y="367.5" width="5.0" height="124.0" fill="#ee0000" stroke="#5a0000" stroke-width="1"/>
<rect x="897.5" y="367.5" width="5.0" height="124.0" fill="#ee0000" stroke="#5a0000" stroke-width="1"/>
<rect x="1013.5" y="367.5" width="5.0" height="124.0" fill="#ee0000" stroke="#5a0000" stroke-width="1"/>
<rect x="1130.5" y="367.5" width="5.0" height="124.0" fill="#ee0000" stroke="#5a0000" stroke-width="1"/>
<rect x="1246.5" y="367.5" width="5.0" height="124.0" fill="#ee0000" stroke="#5a0000" stroke-width="1"/>
<rect x="1363.5" y="367.5" width="5.0" height="124.0" fill="#ee0000" stroke="#5a0000" stroke-width="1"/>
<rect x="1480.5" y="367.5" width="5.0" height="124.0" fill="#ee0000" stroke="#5a0000" stroke-width="1"/>
<rect x="1596.5" y="367.5" width="5.0" height="124.0" fill="#ee0000" stroke="#5a0000" stroke-width="1"/>
<rect x="1713.5" y="367.5" width="5.0" height="124.0" fill="#ee0000" stroke="#5a0000" stroke-width="1"/>
<rect x="1829.5" y="367.5" width="5.0" height="124.0" fill="#ee0000" stroke="#5a0000" stroke-width="1"/>
<rect x="339.5" y="594.5" width="5.0" height="125.0" fill="#ee0000" stroke="#5a0000" stroke-width="1"/>
<rect x="452.5" y="594.5" width="5.0" height="125.0" fill="#ee0000" stroke="#5a0000" stroke-width="1"/>
<rect x="574.5" y="594.5" width="5.0" height="125.0" fill="#ee0000" stroke="#5a0000" stroke-width="1"/>
<rect x="678.5" y="594.5" width="5.0" height="125.0" fill="#ee0000" stroke="#5a0000" stroke-width="1"/>
<rect x="791.5" y="594.5" width="5.0" height="125.0" fill="#ee0000" stroke="#5a0000" stroke-width="1"/>
<rect x="904.5" y="594.5" width="5.0" height="125.0" fill="#ee0000" stroke="#5a0000" stroke-width="1"/>
<rect x="339.5" y="850.5" width="5.0" height="124.0" fill="#ee0000" stroke="#5a0000" stroke-width="1"/>
<rect x="449.5" y="850.5" width="5.0" height="124.0" fill="#ee0000" stroke="#5a0000" stroke-width="1"/>
<rect x="559.5" y="850.5" width="5.0" height="124.0" fill="#ee0000" stroke="#5a0000" stroke-width="1"/>
<rect x="670.5" y="850.5" width="5.0" height="124.0" fill="#ee0000" stroke="#5a0000" stroke-width="1"/>
<rect x="779.5" y="850.5" width="5.0" height="124.0" fill="#ee0000" stroke="#5a0000" stroke-width="1"/>
<rect x="991.5" y="850.5" width="5.0" height="124.0" fill="#ee0000" stroke="#5a0000" stroke-width="1"/>
<rect x="1110.5" y="850.5" width="5.0" height="124.0" fill="#ee0000" stroke="#5a0000" stroke-width="1"/>
<rect x="1229.5" y="850.5" width="5.0" height="124.0" fill="#ee0000" stroke="#5a0000" stroke-width="1"/>
<rect x="1348.5" y="850.5" width="5.0" height="124.0" fill="#ee0000" stroke="#5a0000" stroke-width="1"/>
<rect x="1467.5" y="850.5" width="5.0" height="124.0" fill="#ee0000" stroke="#5a0000" stroke-width="1"/>
<rect x="1586.5" y="850.5" width="5.0" height="124.0" fill="#ee0000" stroke="#5a0000" stroke-width="1"/>
<rect x="1705.5" y="850.5" width="5.0" height="124.0" fill="#ee0000" stroke="#5a0000" stroke-width="1"/>
<rect x="527.5" y="383.5" width="124.0" height="5.0" fill="#ee0000" stroke="#5a0000" stroke-width="1"/>
<rect x="527.5" y="450.5" width="124.0" height="5.0" fill="#ee0000" stroke="#5a0000" stroke-width="1"/>
<rect x="532.5" y="518.5" width="119.0" height="5.0" fill="#ee0000" stroke="#5a0000" stroke-width="1"/>
<rect x="202.5" y="611.5" width="124.0" height="5.0" fill="#ee0000" stroke="#5a0000" stroke-width="1"/>
<rect x="202.5" y="723.5" width="124.0" height="5.0" fill="#ee0000" stroke="#5a0000" stroke-width="1"/>
<rect x="202.5" y="838.5" width="124.0" height="5.0" fill="#ee0000" stroke="#5a0000" stroke-width="1"/>
<rect x="202.5" y="952.5" width="124.0" height="5.0" fill="#ee0000" stroke="#5a0000" stroke-width="1"/>
<rect x="798.5" y="731.5" width="124.0" height="5.0" fill="#ee0000" stroke="#5a0000" stroke-width="1"/>
<rect x="798.5" y="843.5" width="124.0" height="5.0" fill="#ee0000" stroke="#5a0000" stroke-width="1"/>
<rect x="798.5" y="951.5" width="124.0" height="5.0" fill="#ee0000" stroke="#5a0000" stroke-width="1"/>
<rect x="1723.5" y="504.5" width="125.0" height="5.0" fill="#ee0000" stroke="#5a0000" stroke-width="1"/>
<rect x="1723.5" y="611.5" width="125.0" height="5.0" fill="#ee0000" stroke="#5a0000" stroke-width="1"/>
<rect x="1723.5" y="729.5" width="125.0" height="5.0" fill="#ee0000" stroke="#5a0000" stroke-width="1"/>
<rect x="1723.5" y="842.5" width="125.0" height="5.0" fill="#ee0000" stroke="#5a0000" stroke-width="1"/>
<rect x="1723.5" y="952.5" width="125.0" height="5.0" fill="#ee0000" stroke="#5a0000" stroke-width="1"/>
<rect x="1131.5" y="367.5" width="89.0" height="5.0" fill="#ee0000" stroke="#5a0000" stroke-width="1"/>
<line x1="632.5" y1="323.5" x2="632.5" y2="377.5" stroke="#000" stroke-width="1"/>
<line x1="769.5" y1="323.5" x2="769.5" y2="377.5" stroke="#000" stroke-width="1"/>
<line x1="881.5" y1="323.5" x2="881.5" y2="377.5" stroke="#000" stroke-width="1"/>
<line x1="1017.5" y1="323.5" x2="1017.5" y2="377.5" stroke="#000" stroke-width="1"/>
<line x1="1120.5" y1="323.5" x2="1120.5" y2="377.5" stroke="#000" stroke-width="1"/>
<line x1="1239.5" y1="323.5" x2="1239.5" y2="377.5" stroke="#000" stroke-width="1"/>
<line x1="1357.5" y1="323.5" x2="1357.5" y2="377.5" stroke="#000" stroke-width="1"/>
<line x1="1493.5" y1="323.5" x2="1493.5" y2="377.5" stroke="#000" stroke-width="1"/>
<line x1="1605.5" y1="323.5" x2="1605.5" y2="377.5" stroke="#000" stroke-width="1"/>
<line x1="1742.5" y1="323.5" x2="1742.5" y2="377.5" stroke="#000" stroke-width="1"/>
<line x1="483.5" y1="437.5" x2="537.5" y2="437.5" stroke="#000" stroke-width="1"/>
<line x1="483.5" y1="515.5" x2="537.5" y2="515.5" stroke="#000" stroke-width="1"/>
<line x1="535.5" y1="527.5" x2="535.5" y2="582.5" stroke="#000" stroke-width="1"/>
<line x1="313.5" y1="551.5" x2="313.5" y2="605.5" stroke="#000" stroke-width="1"/>
<line x1="409.5" y1="551.5" x2="409.5" y2="605.5" stroke="#000" stroke-width="1"/>
<line x1="462.5" y1="551.5" x2="462.5" y2="605.5" stroke="#000" stroke-width="1"/>
<line x1="590.5" y1="551.5" x2="590.5" y2="605.5" stroke="#000" stroke-width="1"/>
<line x1="669.5" y1="551.5" x2="669.5" y2="605.5" stroke="#000" stroke-width="1"/>
<line x1="806.5" y1="551.5" x2="806.5" y2="605.5" stroke="#000" stroke-width="1"/>
<line x1="158.5" y1="658.5" x2="212.5" y2="658.5" stroke="#000" stroke-width="1"/>
<line x1="158.5" y1="795.5" x2="212.5" y2="795.5" stroke="#000" stroke-width="1"/>
<line x1="158.5" y1="874.5" x2="212.5" y2="874.5" stroke="#000" stroke-width="1"/>
<line x1="158.5" y1="933.5" x2="212.5" y2="933.5" stroke="#000" stroke-width="1"/>
<line x1="912.5" y1="626.5" x2="966.5" y2="626.5" stroke="#000" stroke-width="1"/>
<line x1="912.5" y1="686.5" x2="966.5" y2="686.5" stroke="#000" stroke-width="1"/>
<line x1="912.5" y1="773.5" x2="966.5" y2="773.5" stroke="#000" stroke-width="1"/>
<line x1="912.5" y1="908.5" x2="966.5" y2="908.5" stroke="#000" stroke-width="1"/>
<line x1="306.5" y1="963.5" x2="306.5" y2="1017.5" stroke="#000" stroke-width="1"/>
<line x1="444.5" y1="963.5" x2="444.5" y2="1017.5" stroke="#000" stroke-width="1"/>
<line x1="562.5" y1="963.5" x2="562.5" y2="1017.5" stroke="#000" stroke-width="1"/>
<line x1="690.5" y1="963.5" x2="690.5" y2="1017.5" stroke="#000" stroke-width="1"/>
<line x1="827.5" y1="963.5" x2="827.5" y2="1017.5" stroke="#000" stroke-width="1"/>
<line x1="914.5" y1="963.5" x2="914.5" y2="1017.5" stroke="#000" stroke-width="1"/>
<line x1="1073.5" y1="963.5" x2="1073.5" y2="1017.5" stroke="#000" stroke-width="1"/>
<line x1="1210.5" y1="963.5" x2="1210.5" y2="1017.5" stroke="#000" stroke-width="1"/>
<line x1="1321.5" y1="963.5" x2="1321.5" y2="1017.5" stroke="#000" stroke-width="1"/>
<line x1="1458.5" y1="963.5" x2="1458.5" y2="1017.5" stroke="#000" stroke-width="1"/>
<line x1="1534.5" y1="963.5" x2="1534.5" y2="1017.5" stroke="#000" stroke-width="1"/>
<line x1="1606.5" y1="963.5" x2="1606.5" y2="1017.5" stroke="#000" stroke-width="1"/>
<line x1="1742.5" y1="963.5" x2="1742.5" y2="1017.5" stroke="#000" stroke-width="1"/>
<line x1="1007.5" y1="986.5" x2="1007.5" y2="1040.5" stroke="#000" stroke-width="1"/>
<line x1="1837.5" y1="431.5" x2="1891.5" y2="431.5" stroke="#000" stroke-width="1"/>
<line x1="1837.5" y1="568.5" x2="1891.5" y2="568.5" stroke="#000" stroke-width="1"/>
<line x1="1837.5" y1="669.5" x2="1891.5" y2="669.5" stroke="#000" stroke-width="1"/>
<line x1="1837.5" y1="772.5" x2="1891.5" y2="772.5" stroke="#000" stroke-width="1"/>
<line x1="1837.5" y1="908.5" x2="1891.5" y2="908.5" stroke="#000" stroke-width="1"/>
<text transform="translate(700,342)" x="0" y="8.6" font-size="24" text-anchor="middle" fill="#000">240</text>
<text transform="translate(949,342)" x="0" y="8.6" font-size="24" text-anchor="middle" fill="#000">240</text>
<text transform="translate(1120,342)" x="0" y="8.6" font-size="24" text-anchor="middle" fill="#000">90</text>
<text transform="translate(1239,342)" x="0" y="8.6" font-size="24" text-anchor="middle" fill="#000">120</text>
<text transform="translate(1425,342)" x="0" y="8.6" font-size="24" text-anchor="middle" fill="#000">240</text>
<text transform="translate(1673,342)" x="0" y="8.6" font-size="24" text-anchor="middle" fill="#000">240</text>
<text transform="translate(314,570)" x="0" y="8.6" font-size="24" text-anchor="middle" fill="#000">120</text>
<text transform="translate(409,570)" x="0" y="8.6" font-size="24" text-anchor="middle" fill="#000">45</text>
<text transform="translate(590,570)" x="0" y="8.6" font-size="24" text-anchor="middle" fill="#000">45</text>
<text transform="translate(738,570)" x="0" y="8.6" font-size="24" text-anchor="middle" fill="#000">240</text>
<text transform="translate(376,1004)" x="0" y="8.6" font-size="24" text-anchor="middle" fill="#000">240</text>
<text transform="translate(562,1004)" x="0" y="8.6" font-size="24" text-anchor="middle" fill="#000">120</text>
<text transform="translate(757,1004)" x="0" y="8.6" font-size="24" text-anchor="middle" fill="#000">240</text>
<text transform="translate(1141,1004)" x="0" y="8.6" font-size="24" text-anchor="middle" fill="#000">240</text>
<text transform="translate(1389,1004)" x="0" y="8.6" font-size="24" text-anchor="middle" fill="#000">240</text>
<text transform="translate(1533,1004)" x="0" y="8.6" font-size="24" text-anchor="middle" fill="#000">30</text>
<text transform="translate(1673,1004)" x="0" y="8.6" font-size="24" text-anchor="middle" fill="#000">240</text>
<text transform="translate(503,436) rotate(-90)" x="0" y="8.6" font-size="24" text-anchor="middle" fill="#000">120</text>
<text transform="translate(503,515) rotate(-90)" x="0" y="8.6" font-size="24" text-anchor="middle" fill="#000">30</text>
<text transform="translate(177,725) rotate(-90)" x="0" y="8.6" font-size="24" text-anchor="middle" fill="#000">240</text>
<text transform="translate(177,873) rotate(-90)" x="0" y="8.6" font-size="24" text-anchor="middle" fill="#000">45</text>
<text transform="translate(177,934) rotate(-90)" x="0" y="8.6" font-size="24" text-anchor="middle" fill="#000">60</text>
<text transform="translate(955,627) rotate(-90)" x="0" y="8.6" font-size="24" text-anchor="middle" fill="#000">45</text>
<text transform="translate(955,686) rotate(-90)" x="0" y="8.6" font-size="24" text-anchor="middle" fill="#000">60</text>
<text transform="translate(955,840) rotate(-90)" x="0" y="8.6" font-size="24" text-anchor="middle" fill="#000">240</text>
<text transform="translate(1879,498) rotate(-90)" x="0" y="8.6" font-size="24" text-anchor="middle" fill="#000">240</text>
<text transform="translate(1879,670) rotate(-90)" x="0" y="8.6" font-size="24" text-anchor="middle" fill="#000">90</text>
<text transform="translate(1879,840) rotate(-90)" x="0" y="8.6" font-size="24" text-anchor="middle" fill="#000">240</text>
<text transform="translate(529,298)" x="0" y="6.6" font-size="18.5" text-anchor="middle" fill="#000">90</text>
<text transform="translate(1843,298)" x="0" y="6.6" font-size="18.5" text-anchor="middle" fill="#000">90</text>
<text transform="translate(205,525)" x="0" y="6.6" font-size="18.5" text-anchor="middle" fill="#000">90</text>
<text transform="translate(918,525)" x="0" y="6.6" font-size="18.5" text-anchor="middle" fill="#000">90</text>
<text transform="translate(461,612)" x="0" y="6.6" font-size="18.5" text-anchor="middle" fill="#000">60</text>
<text transform="translate(534,612)" x="0" y="6.6" font-size="18.5" text-anchor="middle" fill="#000">60</text>
<text transform="translate(205,1047)" x="0" y="6.6" font-size="18.5" text-anchor="middle" fill="#000">90</text>
<text transform="translate(913,1047)" x="0" y="6.6" font-size="18.5" text-anchor="middle" fill="#000">60</text>
<text transform="translate(986,1047)" x="0" y="6.6" font-size="18.5" text-anchor="middle" fill="#000">60</text>
<text transform="translate(1843,1047)" x="0" y="6.6" font-size="18.5" text-anchor="middle" fill="#000">90</text>
<text transform="translate(457,342) rotate(-90)" x="0" y="6.6" font-size="18.5" text-anchor="middle" fill="#000">60</text>
<text transform="translate(1920,342) rotate(-90)" x="0" y="6.6" font-size="18.5" text-anchor="middle" fill="#000">60</text>
<text transform="translate(133,570) rotate(-90)" x="0" y="6.6" font-size="18.5" text-anchor="middle" fill="#000">60</text>
<text transform="translate(995,570) rotate(-90)" x="0" y="6.6" font-size="18.5" text-anchor="middle" fill="#000">60</text>
<text transform="translate(133,997) rotate(-90)" x="0" y="6.6" font-size="18.5" text-anchor="middle" fill="#000">60</text>
<text transform="translate(1920,997) rotate(-90)" x="0" y="6.6" font-size="18.5" text-anchor="middle" fill="#000">60</text>
<text transform="translate(1171,292) scale(0.87,1)" x="0" y="4.3" font-size="12" text-anchor="middle" fill="#000">10</text>
<text transform="translate(571,392) scale(0.87,1)" x="0" y="4.3" font-size="12" text-anchor="middle" fill="#000">10</text>
<text transform="translate(1171,392) scale(0.87,1)" x="0" y="4.3" font-size="12" text-anchor="middle" fill="#000">10</text>
<text transform="translate(1803,392) scale(0.87,1)" x="0" y="4.3" font-size="12" text-anchor="middle" fill="#000">10</text>
<text transform="translate(377,518) scale(0.87,1)" x="0" y="4.3" font-size="12" text-anchor="middle" fill="#000">4</text>
<text transform="translate(381,528) scale(0.87,1)" x="0" y="4.3" font-size="12" text-anchor="middle" fill="#000">5</text>
<text transform="translate(613,519) scale(0.87,1)" x="0" y="4.3" font-size="12" text-anchor="middle" fill="#000">0,7</text>
<text transform="translate(867,519) scale(0.87,1)" x="0" y="4.3" font-size="12" text-anchor="middle" fill="#000">10</text>
<text transform="translate(247,620) scale(0.87,1)" x="0" y="4.3" font-size="12" text-anchor="middle" fill="#000">10</text>
<text transform="translate(377,610) scale(0.87,1)" x="0" y="4.3" font-size="12" text-anchor="middle" fill="#000">5</text>
<text transform="translate(381,620) scale(0.87,1)" x="0" y="4.3" font-size="12" text-anchor="middle" fill="#000">4</text>
<text transform="translate(499,619) scale(0.87,1)" x="0" y="4.3" font-size="12" text-anchor="middle" fill="#000">10</text>
<text transform="translate(613,619) scale(0.87,1)" x="0" y="4.3" font-size="12" text-anchor="middle" fill="#000">0,7</text>
<text transform="translate(867,609) scale(0.87,1)" x="0" y="4.3" font-size="12" text-anchor="middle" fill="#000">10</text>
<text transform="translate(878,619) scale(0.87,1)" x="0" y="4.3" font-size="12" text-anchor="middle" fill="#000">10</text>
<text transform="translate(247,953) scale(0.87,1)" x="0" y="4.3" font-size="12" text-anchor="middle" fill="#000">10</text>
<text transform="translate(629,953) scale(0.87,1)" x="0" y="4.3" font-size="12" text-anchor="middle" fill="#000">10</text>
<text transform="translate(1515,953) scale(0.87,1)" x="0" y="4.3" font-size="12" text-anchor="middle" fill="#000">4</text>
<text transform="translate(1803,953) scale(0.87,1)" x="0" y="4.3" font-size="12" text-anchor="middle" fill="#000">10</text>
<text transform="translate(629,1054) scale(0.87,1)" x="0" y="4.3" font-size="12" text-anchor="middle" fill="#000">10</text>
<text transform="translate(950,1054) scale(0.87,1)" x="0" y="4.3" font-size="12" text-anchor="middle" fill="#000">10</text>
<text transform="translate(1515,1054) scale(0.87,1)" x="0" y="4.3" font-size="12" text-anchor="middle" fill="#000">4</text>
<text transform="translate(450,375) rotate(-90) scale(0.87,1)" x="0" y="4.3" font-size="12" text-anchor="middle" fill="#000">2</text>
<text transform="translate(1928,375) rotate(-90) scale(0.87,1)" x="0" y="4.3" font-size="12" text-anchor="middle" fill="#000">2</text>
<text transform="translate(124,602) rotate(-90) scale(0.87,1)" x="0" y="4.3" font-size="12" text-anchor="middle" fill="#000">2</text>
<text transform="translate(1002,602) rotate(-90) scale(0.87,1)" x="0" y="4.3" font-size="12" text-anchor="middle" fill="#000">2</text>
<text transform="translate(901,652) rotate(-90) scale(0.87,1)" x="0" y="4.3" font-size="12" text-anchor="middle" fill="#000">5</text>
<text transform="translate(1002,652) rotate(-90) scale(0.87,1)" x="0" y="4.3" font-size="12" text-anchor="middle" fill="#000">5</text>
<text transform="translate(125,900) rotate(-90) scale(0.87,1)" x="0" y="4.3" font-size="12" text-anchor="middle" fill="#000">5</text>
<text transform="translate(225,900) rotate(-90) scale(0.87,1)" x="0" y="4.3" font-size="12" text-anchor="middle" fill="#000">5</text>
<text transform="translate(124,966) rotate(-90) scale(0.87,1)" x="0" y="4.3" font-size="12" text-anchor="middle" fill="#000">2</text>
<text transform="translate(1928,967) rotate(-90) scale(0.87,1)" x="0" y="4.3" font-size="12" text-anchor="middle" fill="#000">2</text>
<text transform="translate(548,362) scale(0.85,1)" x="0" y="4.7" font-size="13" text-anchor="middle" fill="#000">50</text>
<text transform="translate(1825,362) scale(0.85,1)" x="0" y="4.7" font-size="13" text-anchor="middle" fill="#000">50</text>
<text transform="translate(224,589) scale(0.85,1)" x="0" y="4.7" font-size="13" text-anchor="middle" fill="#000">50</text>
<text transform="translate(449,546) scale(0.85,1)" x="0" y="4.7" font-size="13" text-anchor="middle" fill="#000">50</text>
<text transform="translate(548,546) scale(0.85,1)" x="0" y="4.7" font-size="13" text-anchor="middle" fill="#000">50</text>
<text transform="translate(899,589) scale(0.85,1)" x="0" y="4.7" font-size="13" text-anchor="middle" fill="#000">50</text>
<text transform="translate(224,980) scale(0.85,1)" x="0" y="4.7" font-size="13" text-anchor="middle" fill="#000">50</text>
<text transform="translate(899,980) scale(0.85,1)" x="0" y="4.7" font-size="13" text-anchor="middle" fill="#000">50</text>
<text transform="translate(999,980) scale(0.85,1)" x="0" y="4.7" font-size="13" text-anchor="middle" fill="#000">50</text>
<text transform="translate(1825,980) scale(0.85,1)" x="0" y="4.7" font-size="13" text-anchor="middle" fill="#000">50</text>
<text transform="translate(521.5,368.2) rotate(-90) scale(0.85,1)" x="0" y="4.7" font-size="13" text-anchor="middle" fill="#000">20</text>
<text transform="translate(1855,368.2) rotate(-90) scale(0.85,1)" x="0" y="4.7" font-size="13" text-anchor="middle" fill="#000">20</text>
<text transform="translate(197,596.3) rotate(-90) scale(0.85,1)" x="0" y="4.7" font-size="13" text-anchor="middle" fill="#000">20</text>
<text transform="translate(477.5,538) rotate(-90) scale(0.85,1)" x="0" y="4.7" font-size="13" text-anchor="middle" fill="#000">20</text>
<text transform="translate(521.5,538) rotate(-90) scale(0.85,1)" x="0" y="4.7" font-size="13" text-anchor="middle" fill="#000">20</text>
<text transform="translate(929,596.3) rotate(-90) scale(0.85,1)" x="0" y="4.7" font-size="13" text-anchor="middle" fill="#000">20</text>
<text transform="translate(197,972.5) rotate(-90) scale(0.85,1)" x="0" y="4.7" font-size="13" text-anchor="middle" fill="#000">20</text>
<text transform="translate(929,972.5) rotate(-90) scale(0.85,1)" x="0" y="4.7" font-size="13" text-anchor="middle" fill="#000">20</text>
<text transform="translate(972,972.5) rotate(-90) scale(0.85,1)" x="0" y="4.7" font-size="13" text-anchor="middle" fill="#000">20</text>
<text transform="translate(1855,972.5) rotate(-90) scale(0.85,1)" x="0" y="4.7" font-size="13" text-anchor="middle" fill="#000">20</text>
<line x1="158.5" y1="220.5" x2="1891.5" y2="220.5" stroke="#000" stroke-width="1"/>
<line x1="158.5" y1="213.5" x2="158.5" y2="227.5" stroke="#000" stroke-width="1"/>
<line x1="189.5" y1="213.5" x2="189.5" y2="227.5" stroke="#000" stroke-width="1"/>
<line x1="483.5" y1="213.5" x2="483.5" y2="227.5" stroke="#000" stroke-width="1"/>
<line x1="515.5" y1="213.5" x2="515.5" y2="227.5" stroke="#000" stroke-width="1"/>
<line x1="934.5" y1="213.5" x2="934.5" y2="227.5" stroke="#000" stroke-width="1"/>
<line x1="966.5" y1="213.5" x2="966.5" y2="227.5" stroke="#000" stroke-width="1"/>
<line x1="1860.5" y1="213.5" x2="1860.5" y2="227.5" stroke="#000" stroke-width="1"/>
<line x1="1891.5" y1="213.5" x2="1891.5" y2="227.5" stroke="#000" stroke-width="1"/>
<text transform="translate(173,207)" x="0" y="7.9" font-size="22" text-anchor="middle" fill="#000">30</text>
<text transform="translate(498,207)" x="0" y="7.9" font-size="22" text-anchor="middle" fill="#000">30</text>
<text transform="translate(949,207)" x="0" y="7.9" font-size="22" text-anchor="middle" fill="#000">30</text>
<text transform="translate(1875,207)" x="0" y="7.9" font-size="22" text-anchor="middle" fill="#000">30</text>
<text transform="translate(335,232)" x="0" y="7.9" font-size="22" text-anchor="middle" fill="#000">284,3</text>
<text transform="translate(723,232)" x="0" y="7.9" font-size="22" text-anchor="middle" fill="#000">405,7</text>
<text transform="translate(1412,232)" x="0" y="7.9" font-size="22" text-anchor="middle" fill="#000">864,3</text>
<text transform="translate(1897,225)" x="0" y="7.9" font-size="22" text-anchor="start" fill="#000">1674,3 cm</text>
<line x1="158.5" y1="1120.5" x2="1891.5" y2="1120.5" stroke="#000" stroke-width="1"/>
<line x1="158.5" y1="1113.5" x2="158.5" y2="1127.5" stroke="#000" stroke-width="1"/>
<line x1="189.5" y1="1113.5" x2="189.5" y2="1127.5" stroke="#000" stroke-width="1"/>
<line x1="934.5" y1="1113.5" x2="934.5" y2="1127.5" stroke="#000" stroke-width="1"/>
<line x1="966.5" y1="1113.5" x2="966.5" y2="1127.5" stroke="#000" stroke-width="1"/>
<line x1="1860.5" y1="1113.5" x2="1860.5" y2="1127.5" stroke="#000" stroke-width="1"/>
<line x1="1891.5" y1="1113.5" x2="1891.5" y2="1127.5" stroke="#000" stroke-width="1"/>
<text transform="translate(173,1132)" x="0" y="7.9" font-size="22" text-anchor="middle" fill="#000">30</text>
<text transform="translate(949,1132)" x="0" y="7.9" font-size="22" text-anchor="middle" fill="#000">30</text>
<text transform="translate(1875,1132)" x="0" y="7.9" font-size="22" text-anchor="middle" fill="#000">30</text>
<text transform="translate(561,1106)" x="0" y="7.9" font-size="22" text-anchor="middle" fill="#000">720</text>
<text transform="translate(1412,1106)" x="0" y="7.9" font-size="22" text-anchor="middle" fill="#000">864,3</text>
<text transform="translate(1897,1125)" x="0" y="7.9" font-size="22" text-anchor="start" fill="#000">1674,3 cm</text>
<line x1="55.5" y1="323.5" x2="55.5" y2="1017.5" stroke="#000" stroke-width="1"/>
<line x1="48.5" y1="323.5" x2="62.5" y2="323.5" stroke="#000" stroke-width="1"/>
<line x1="48.5" y1="355.5" x2="62.5" y2="355.5" stroke="#000" stroke-width="1"/>
<line x1="48.5" y1="551.5" x2="62.5" y2="551.5" stroke="#000" stroke-width="1"/>
<line x1="48.5" y1="582.5" x2="62.5" y2="582.5" stroke="#000" stroke-width="1"/>
<line x1="48.5" y1="986.5" x2="62.5" y2="986.5" stroke="#000" stroke-width="1"/>
<line x1="48.5" y1="1017.5" x2="62.5" y2="1017.5" stroke="#000" stroke-width="1"/>
<text transform="translate(40,339) rotate(-90)" x="0" y="7.9" font-size="22" text-anchor="middle" fill="#000">30</text>
<text transform="translate(40,567) rotate(-90)" x="0" y="7.9" font-size="22" text-anchor="middle" fill="#000">30</text>
<text transform="translate(40,1002) rotate(-90)" x="0" y="7.9" font-size="22" text-anchor="middle" fill="#000">30</text>
<text transform="translate(68,453) rotate(-90)" x="0" y="7.9" font-size="22" text-anchor="middle" fill="#000">190</text>
<text transform="translate(68,784) rotate(-90)" x="0" y="7.9" font-size="22" text-anchor="middle" fill="#000">390</text>
<text transform="translate(62,318) rotate(-90)" x="0" y="7.9" font-size="22" text-anchor="start">670 cm</text>
<line x1="1995.5" y1="323.5" x2="1995.5" y2="1017.5" stroke="#000" stroke-width="1"/>
<line x1="1988.5" y1="323.5" x2="2002.5" y2="323.5" stroke="#000" stroke-width="1"/>
<line x1="1988.5" y1="355.5" x2="2002.5" y2="355.5" stroke="#000" stroke-width="1"/>
<line x1="1988.5" y1="986.5" x2="2002.5" y2="986.5" stroke="#000" stroke-width="1"/>
<line x1="1988.5" y1="1017.5" x2="2002.5" y2="1017.5" stroke="#000" stroke-width="1"/>
<text transform="translate(2008,339) rotate(-90)" x="0" y="7.9" font-size="22" text-anchor="middle" fill="#000">30</text>
<text transform="translate(2008,1002) rotate(-90)" x="0" y="7.9" font-size="22" text-anchor="middle" fill="#000">30</text>
<text transform="translate(1981,670) rotate(-90)" x="0" y="7.9" font-size="22" text-anchor="middle" fill="#000">610</text>
<text transform="translate(2002,318) rotate(-90)" x="0" y="7.9" font-size="22" text-anchor="start">670 cm</text>
</svg>
<!-- status bar -->
<div class="abs" style="left:3px;top:1172px;width:2043px;height:2px;background:#f6f6f6;"></div><div class="abs" style="left:3px;top:1174px;width:2041px;height:2px;background:#dcdcdc;"></div>
<div class="abs" style="left:3px;top:1176px;width:2043px;height:23px;background:#f0f0f0;"></div>
<div class="abs" style="left:146px;top:1177px;width:1px;height:21px;background:#d8d8d8"></div>
<div class="abs" style="left:288px;top:1177px;width:1px;height:21px;background:#d8d8d8"></div>
<div class="abs" style="left:429px;top:1177px;width:1px;height:21px;background:#d8d8d8"></div>
<div class="abs" style="left:8px;top:1180px;font-size:11.5px;font-weight:bold;color:#111;white-space:nowrap;transform-origin:0 0;transform:scaleX(0.91)">Takt 1</div>
<div class="abs" style="left:151px;top:1180px;font-size:11.5px;font-weight:bold;color:#111;white-space:nowrap;transform-origin:0 0;transform:scaleX(0.91)">Schnitthöhe: 10 cm</div>
<div class="abs" style="left:434px;top:1180px;font-size:11.5px;font-weight:bold;color:#111;white-space:nowrap;transform-origin:0 0;transform:scaleX(0.91)">Peri Maximo (Hauptlager)</div>
<svg class="abs" style="left:2030px;top:1184px" width="14" height="14" viewBox="0 0 14 14"><g fill="#909090"><rect x="10" y="4" width="1.2" height="1.2"/><rect x="7" y="7" width="1.2" height="1.2"/><rect x="10" y="7" width="1.2" height="1.2"/><rect x="4" y="10" width="1.2" height="1.2"/><rect x="7" y="10" width="1.2" height="1.2"/><rect x="10" y="10" width="1.2" height="1.2"/></g></svg>
</body></html>
